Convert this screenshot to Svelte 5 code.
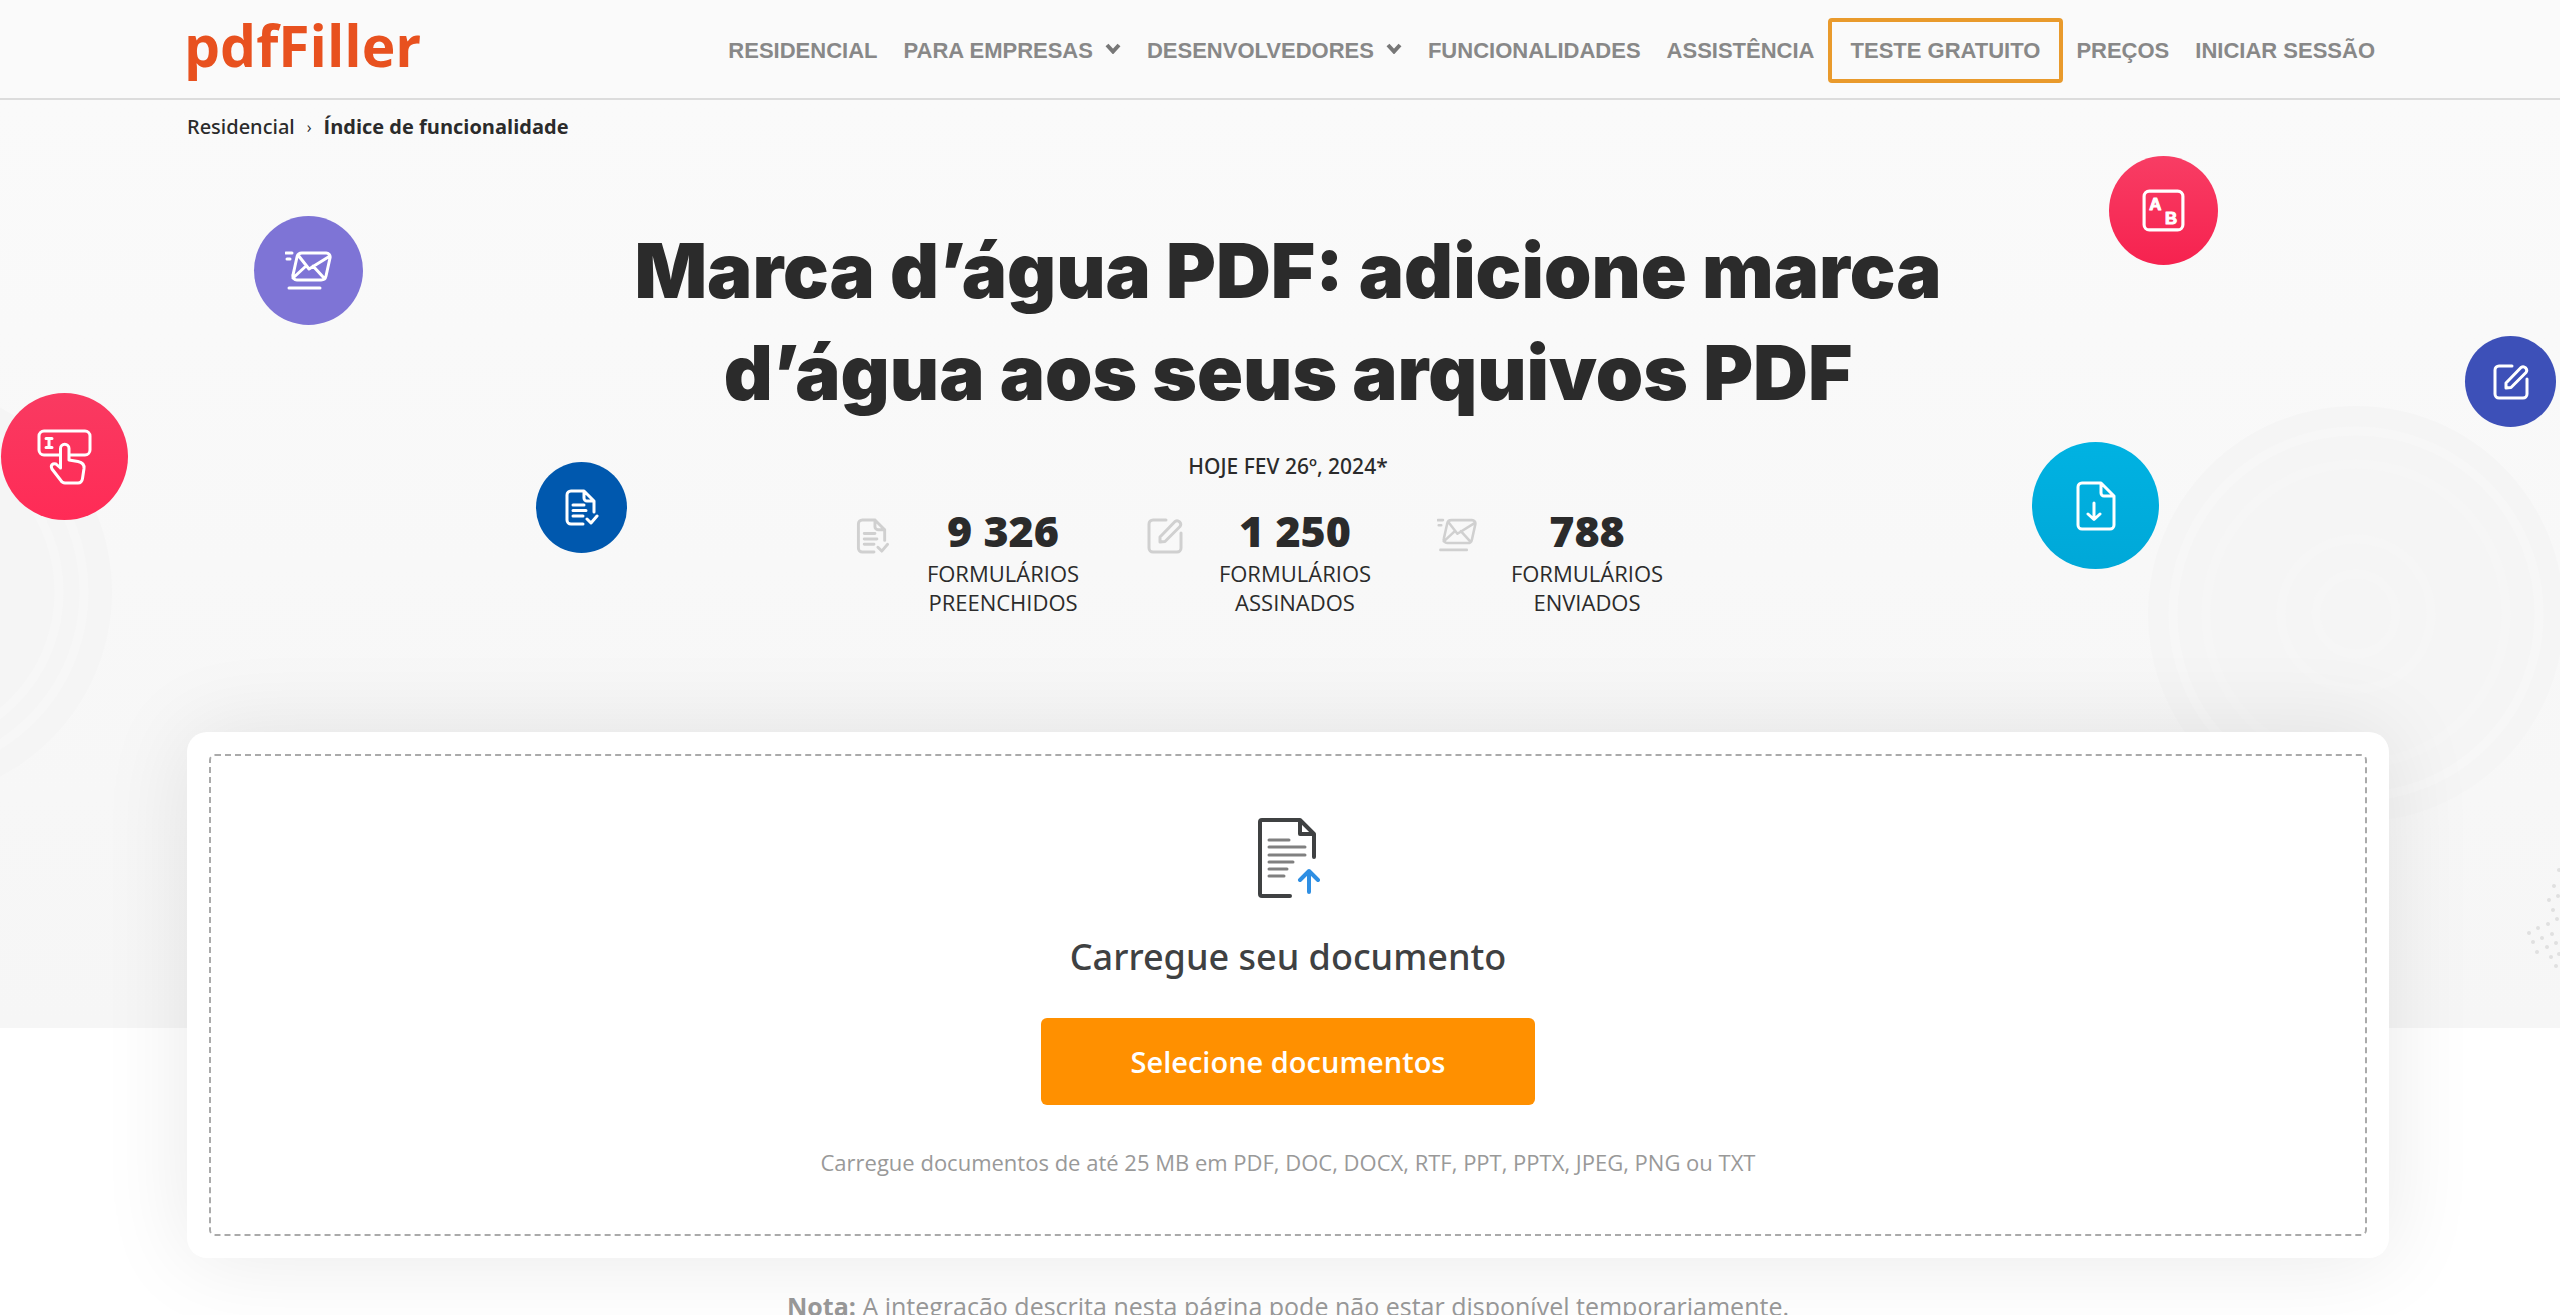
<script>
  const nav = [
    { label: 'RESIDENCIAL' },
    { label: 'PARA EMPRESAS', menu: true },
    { label: 'DESENVOLVEDORES', menu: true },
    { label: 'FUNCIONALIDADES' },
    { label: 'ASSISTÊNCIA' },
    { label: 'TESTE GRATUITO', trial: true },
    { label: 'PREÇOS' },
    { label: 'INICIAR SESSÃO' },
  ];

  const stats = [
    { icon: 'filled', value: '9 326', first: 'FORMULÁRIOS', second: 'PREENCHIDOS' },
    { icon: 'signed', value: '1 250', first: 'FORMULÁRIOS', second: 'ASSINADOS' },
    { icon: 'sent', value: '788', first: 'FORMULÁRIOS', second: 'ENVIADOS' },
  ];

  const bubbles = ['sent', 'tap', 'filled', 'letters', 'signed', 'download'];

  // Halftone corner at the right edge: rows of dots leaning with the slope.
  const dots = [
    [2529, 933], [2538, 928], [2548, 924], [2557, 919],
    [2533, 942], [2542, 938], [2552, 934], [2537, 952],
    [2547, 947], [2556, 943], [2551, 957], [2556, 966], [2559, 954],
    [2549, 900], [2554, 886], [2558, 896], [2553, 910], [2559, 870],
  ].map(([x, y]) => [x - 2520, y - 860]);
</script>

{#snippet icon(name)}
  {#if name === 'filled'}
    <svg class="icon" width="34" height="37" viewBox="0 0 34 37" aria-hidden="true">
      <path d="M18 35H6a4 4 0 0 1-4-4V6a4 4 0 0 1 4-4h13l10 10v11M19 2v7a3 3 0 0 0 3 3h7M8 16h11M8 21.500h13M8 27h10M22 30l4 4 6-7" />
    </svg>
  {:else if name === 'signed'}
    <svg class="icon" width="36" height="36" viewBox="0 0 36 36" aria-hidden="true">
      <path d="M19 2H6a4 4 0 0 0-4 4v24a4 4 0 0 0 4 4h24a4 4 0 0 0 4-4V15M13 24v-5L28 3.500a3.600 3.600 0 0 1 5 5L18 23.500z" />
    </svg>
  {:else if name === 'sent'}
    <svg class="icon mail" width="47" height="39" viewBox="0 0 47 39" aria-hidden="true">
      <path d="M17 2h24a4 4 0 0 1 4 5l-4 18a5 5 0 0 1-5 4H12a4 4 0 0 1-4-5l4-18a5 5 0 0 1 5-4zM13 4l11 14L45 5M8 27l13-12M28 15l11 12M1 2h6M2 8h3M4 37h31" />
    </svg>
  {:else if name === 'tap'}
    <svg class="icon" width="57" height="56" viewBox="0 0 55 56" aria-hidden="true">
      <path d="M23 26H7a5 5 0 0 1-5-5V7a5 5 0 0 1 5-5h41a5 5 0 0 1 5 5v14a5 5 0 0 1-5 5H33M23.500 39V19.500a4.200 4.200 0 0 1 8.500 0V31l9 1.500c4.500 1 6.500 3 6 7l-1.500 10c-.5 3-2 4.500-4.500 4.500H28c-2 0-3-.5-4.500-3L15 40c-2-4 1-6 4-5l4.500 4M9 9.500h6M9 18.500h6M12 9.500v9" />
    </svg>
  {:else if name === 'letters'}
    <svg class="icon" width="43" height="43" viewBox="0 0 41 41" aria-hidden="true">
      <rect x="2" y="2" width="37" height="37" rx="5" />
      <text x="7" y="20">A</text>
      <text x="22" y="33">B</text>
    </svg>
  {:else}
    <svg class="icon" width="40" height="50" viewBox="0 0 40 50" aria-hidden="true">
      <path d="M25 2H6a4 4 0 0 0-4 4v38a4 4 0 0 0 4 4h28a4 4 0 0 0 4-4V15zM25 2v10a3 3 0 0 0 3 3h10M18 22v16M12 33l6 5.500 6-5.500" />
    </svg>
  {/if}
{/snippet}

<header class="bar">
  <a class="logo" href="/">pdfFiller</a>
  <nav class="links" aria-label="Principal">
    {#each nav as item}
      <a class="link" class:trial={item.trial} href="/">
        {item.label}
        {#if item.menu}
          <svg width="16" height="11" viewBox="0 0 16 11" aria-hidden="true">
            <path d="M2 2l6 6.500L14 2" />
          </svg>
        {/if}
      </a>
    {/each}
  </nav>
</header>

<main>
  <section class="hero">
    <div class="art" aria-hidden="true">
      <svg class="rings left" width="420" height="420" viewBox="0 0 420 420">
        <circle class="disc" cx="210" cy="210" r="208" />
        <circle class="ring" cx="210" cy="210" r="180" />
        <circle class="ring" cx="210" cy="210" r="155" />
      </svg>
      <svg class="rings right" width="420" height="420" viewBox="0 0 420 420">
        <circle class="disc" cx="210" cy="210" r="208" />
        <circle class="ring" cx="210" cy="210" r="183" />
        <circle class="ring faint" cx="210" cy="210" r="150" />
        <circle class="ring faint" cx="210" cy="210" r="75" />
        <circle class="ring faint" cx="210" cy="210" r="40" />
      </svg>
      <svg class="dots" width="40" height="120" viewBox="0 0 40 120">
        {#each dots as [x, y]}
          <circle cx={x} cy={y} r="2" />
        {/each}
      </svg>
      {#each bubbles as name}
        <div class="bubble {name}">{@render icon(name)}</div>
      {/each}
    </div>

    <nav class="crumbs" aria-label="Trilha">
      <a href="/">Residencial</a>
      <span class="sep">›</span>
      <strong>Índice de funcionalidade</strong>
    </nav>

    <h1>Marca d’água PDF: adicione marca d’água aos seus arquivos PDF</h1>

    <p class="date">HOJE FEV 26º, 2024*</p>
    <ul class="stats">
      {#each stats as s}
        <li>
          <span class="stat-icon">{@render icon(s.icon)}</span>
          <div class="stat-text">
            <strong>{s.value}</strong>
            <span>{s.first}</span>
            <span>{s.second}</span>
          </div>
        </li>
      {/each}
    </ul>

    <div class="card">
      <div class="drop">
        <svg class="upload" width="64" height="80" viewBox="-2 0 64 80" aria-hidden="true">
          <path class="ink" d="M32 78H4a2 2 0 0 1-2-2V4a2 2 0 0 1 2-2h38l14 14v23M42 2v14h14" />
          <path class="lines" d="M11 22h20M11 29h36M11 37h36M11 44h24M11 51h18M11 58h15" />
          <path class="arrow" d="M51 74V53M42 62l9-9 9 9" />
        </svg>
        <h2>Carregue seu documento</h2>
        <button type="button">Selecione documentos</button>
        <p>Carregue documentos de até 25 MB em PDF, DOC, DOCX, RTF, PPT, PPTX, JPEG, PNG ou TXT</p>
      </div>
    </div>
  </section>

  <p class="note"><strong>Nota:</strong> A integração descrita nesta página pode não estar disponível temporariamente.</p>
</main>

<style>
  :global(body) {
    margin: 0;
    background: #fff;
    font-family: 'Open Sans', 'Noto Sans', sans-serif;
    color: #2b2b2b;
  }
  :global(html) {
    overflow: hidden;
  }
  a {
    color: inherit;
    text-decoration: none;
  }
  .bar {
    display: flex;
    align-items: center;
    justify-content: space-between;
    height: 98px;
    padding: 0 172px 0 184px;
    border-bottom: 2px solid #dcdcdc;
    background: #fafafa;
  }
  .logo {
    color: #e8511f;
    font-size: 57px;
    line-height: 60px;
    font-weight: 700;
    padding-bottom: 8px;
  }
  .links {
    display: flex;
    align-items: center;
    padding-top: 3px;
  }
  .link {
    display: flex;
    align-items: center;
    gap: 12px;
    padding: 0 13px;
    font: 700 22px/30px 'Liberation Sans', Arial, sans-serif;
    color: #888;
    white-space: nowrap;
  }
  .link svg {
    fill: none;
    stroke: #777;
    stroke-width: 4;
    margin-bottom: 4px;
  }
  .trial {
    box-sizing: border-box;
    height: 65px;
    padding: 0 19px;
    border: 4px solid #e99a2c;
    border-radius: 4px;
  }
  .hero {
    position: relative;
    background: linear-gradient(#fafafa, #f6f6f6);
    padding: 13px 171px 0 187px;
    display: flex;
    flex-direction: column;
    align-items: center;
  }
  .art {
    position: absolute;
    inset: 0;
    overflow: hidden;
  }
  .rings {
    position: absolute;
  }
  .rings.left {
    left: -306px;
    top: 282px;
  }
  .rings.right {
    right: -6px;
    top: 304px;
  }
  .disc {
    fill: #f5f5f5;
  }
  .ring {
    fill: none;
    stroke: #f7f7f7;
    stroke-width: 9;
  }
  .faint {
    stroke: #f6f6f6;
  }
  .dots {
    position: absolute;
    right: 0;
    top: 760px;
    fill: #e0e0e0;
  }
  .icon {
    fill: none;
    stroke: currentColor;
    stroke-width: 3;
    stroke-linecap: round;
    stroke-linejoin: round;
  }
  .icon text {
    font: 700 16px 'Liberation Sans', Arial, sans-serif;
    fill: currentColor;
    stroke-width: 1;
  }
  .bubble {
    position: absolute;
    display: flex;
    align-items: center;
    justify-content: center;
    border-radius: 50%;
    color: #fff;
  }
  .bubble.sent {
    left: 254px;
    top: 116px;
    width: 109px;
    height: 109px;
    background: #7e74d6;
  }
  .bubble.tap {
    left: 1px;
    top: 293px;
    width: 127px;
    height: 127px;
    background: linear-gradient(#f93a61, #ff2b56);
  }
  .bubble.filled {
    left: 536px;
    top: 362px;
    width: 91px;
    height: 91px;
    background: #0058ae;
  }
  .bubble.letters {
    right: 342px;
    top: 56px;
    width: 109px;
    height: 109px;
    background: linear-gradient(#f83d64, #f6224f);
  }
  .bubble.signed {
    right: 4px;
    top: 236px;
    width: 91px;
    height: 91px;
    background: #3d50b8;
  }
  .bubble.download {
    right: 401px;
    top: 342px;
    width: 127px;
    height: 127px;
    background: linear-gradient(#00b2e2, #00a8d8);
  }
  .crumbs {
    position: relative;
    align-self: flex-start;
    display: flex;
    align-items: center;
    gap: 12px;
    font-size: 20px;
    line-height: 28px;
  }
  .crumbs a {
    font: 500 20px/28px 'Noto Sans', 'Open Sans', sans-serif;
  }
  .sep {
    font-size: 16px;
  }
  h1 {
    position: relative;
    max-width: 1400px;
    margin: 78px 0 0;
    font: 900 76px/102px Inter, sans-serif;
    text-align: center;
  }
  .date {
    position: relative;
    margin: 28px 0 0;
    font: 500 21px/30px 'Noto Sans', 'Open Sans', sans-serif;
  }
  .stats {
    position: relative;
    display: flex;
    margin: 22px 0 0;
    padding: 0;
    list-style: none;
  }
  .stats li {
    display: grid;
    grid-template-columns: 46px 214px;
    padding-right: 32px;
  }
  .stat-icon {
    display: flex;
    justify-content: center;
    padding-top: 15px;
    color: #d0d0d0;
  }
  .stat-icon .icon {
    height: 36px;
  }
  .stat-icon .mail {
    width: 40px;
    height: 34px;
  }
  .stat-text {
    display: flex;
    flex-direction: column;
    align-items: center;
    font-size: 22px;
    line-height: 29px;
  }
  .stat-text strong {
    font-size: 43px;
    line-height: 56px;
    font-weight: 800;
  }
  .card {
    position: relative;
    z-index: 1;
    align-self: stretch;
    margin: 115px 0 -230px;
    padding: 22px;
    border-radius: 20px;
    background: #fff;
    box-shadow: 0 0 90px rgba(0, 0, 0, 0.09);
  }
  .drop {
    display: flex;
    flex-direction: column;
    align-items: center;
    padding: 62px 40px 57px;
    border: 2px dashed #aaa;
    border-radius: 6px;
  }
  .upload {
    fill: none;
    stroke-width: 4;
    stroke-linecap: round;
    stroke-linejoin: round;
  }
  .ink {
    stroke: #3f4142;
  }
  .lines {
    stroke: #808080;
    stroke-width: 3;
  }
  .arrow {
    stroke: #2f8fe3;
  }
  h2 {
    margin: 34px 0 0;
    font: 500 36px/50px 'Noto Sans', 'Open Sans', sans-serif;
    color: #3f4142;
  }
  button {
    width: 494px;
    height: 87px;
    margin-top: 36px;
    border: 0;
    border-radius: 6px;
    background: #ff9000;
    color: #fff;
    font: 600 29px/40px 'Open Sans', sans-serif;
  }
  .drop p {
    margin: 42px 0 0;
    font-size: 22px;
    line-height: 30px;
    color: #999;
    text-align: center;
  }
  .note {
    margin: 0;
    padding: 258px 171px 0 187px;
    font-size: 25px;
    line-height: 40px;
    color: #999;
    text-align: center;
  }
</style>
